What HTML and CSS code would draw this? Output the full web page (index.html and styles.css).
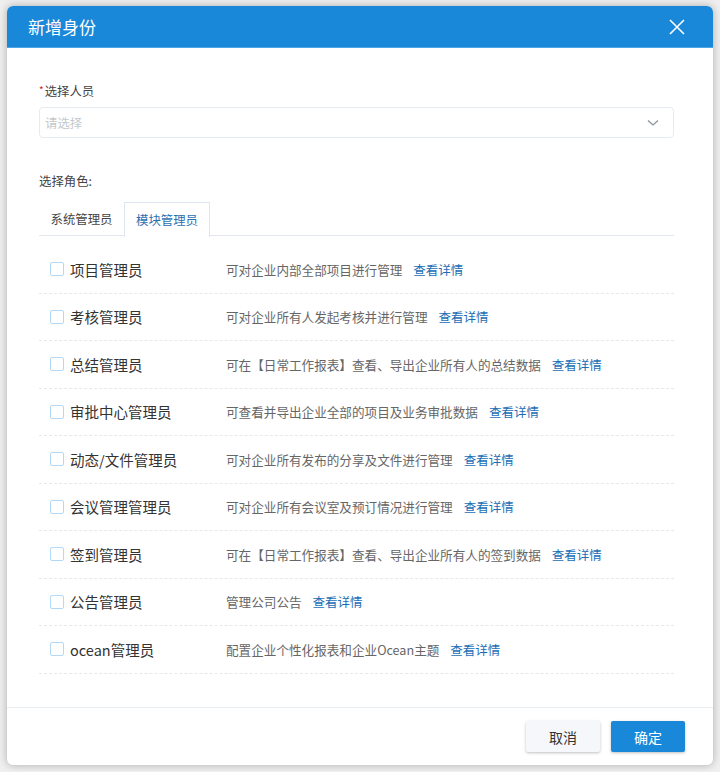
FILE: index.html
```html
<!DOCTYPE html>
<html lang="zh">
<head>
<meta charset="utf-8">
<title>新增身份</title>
<link rel="stylesheet" href="styles.css">
</head>
<body>
<div class="dialog">
  <div class="header">
    <span class="title">新增身份</span>
    <svg class="close" width="16" height="16" viewBox="0 0 16 16"><path d="M1 1L15 15M15 1L1 15" stroke="#fff" stroke-width="1.6" fill="none"/></svg>
  </div>
  <div class="content">
    <div class="label"><span class="req">*</span>选择人员</div>
    <div class="select">
      <span class="placeholder">请选择</span>
      <svg width="12" height="8" viewBox="0 0 12 8"><path d="M1 1.5L6 6L11 1.5" stroke="#8a939c" stroke-width="1.3" fill="none"/></svg>
    </div>
    <div class="label role">选择角色:</div>
    <div class="tabs">
      <div class="tab">系统管理员</div>
      <div class="tab active">模块管理员</div>
    </div>
    <div class="list">
      <div class="row"><span class="cb"></span><span class="name">项目管理员</span><span class="desc">可对企业内部全部项目进行管理</span><span class="link">查看详情</span></div>
      <div class="row"><span class="cb"></span><span class="name">考核管理员</span><span class="desc">可对企业所有人发起考核并进行管理</span><span class="link">查看详情</span></div>
      <div class="row"><span class="cb"></span><span class="name">总结管理员</span><span class="desc">可在【日常工作报表】查看、导出企业所有人的总结数据</span><span class="link">查看详情</span></div>
      <div class="row"><span class="cb"></span><span class="name">审批中心管理员</span><span class="desc">可查看并导出企业全部的项目及业务审批数据</span><span class="link">查看详情</span></div>
      <div class="row"><span class="cb"></span><span class="name">动态/文件管理员</span><span class="desc">可对企业所有发布的分享及文件进行管理</span><span class="link">查看详情</span></div>
      <div class="row"><span class="cb"></span><span class="name">会议管理管理员</span><span class="desc">可对企业所有会议室及预订情况进行管理</span><span class="link">查看详情</span></div>
      <div class="row"><span class="cb"></span><span class="name">签到管理员</span><span class="desc">可在【日常工作报表】查看、导出企业所有人的签到数据</span><span class="link">查看详情</span></div>
      <div class="row"><span class="cb"></span><span class="name">公告管理员</span><span class="desc">管理公司公告</span><span class="link">查看详情</span></div>
      <div class="row"><span class="cb"></span><span class="name">ocean管理员</span><span class="desc">配置企业个性化报表和企业Ocean主题</span><span class="link">查看详情</span></div>
    </div>
  </div>
  <div class="footer">
    <button class="btn cancel">取消</button>
    <button class="btn ok">确定</button>
  </div>
</div>
</body>
</html>
```
FILE: styles.css
```css
* { box-sizing: border-box; }
html, body { margin: 0; }
body {
  background: #efefef;
  padding: 6px 7px;
  font-family: "Noto Sans CJK SC", "Noto Sans", sans-serif;
  color: #333;
}
.dialog {
  width: 706px;
  height: 759px;
  background: #fff;
  border-radius: 6px;
  box-shadow: 0 0 8px rgba(0,0,0,0.28);
  display: flex;
  flex-direction: column;
  overflow: hidden;
}
.header {
  height: 42px;
  flex: none;
  background: #1a88d9;
  border-bottom: 1px solid #4fa6e6;
  display: flex;
  align-items: center;
  justify-content: space-between;
  padding: 0 28px 0 21px;
}
.title { color: #fff; font-size: 17px; }
.content {
  flex: 1;
  padding: 33px 39px 0 32px;
}
.label {
  font-size: 12.4px;
  line-height: 18px;
  color: #444;
  margin-bottom: 7px;
}
.req { color: #e02020; font-size: 10px; vertical-align: 2px; margin-right: 1px; }
.select {
  height: 31px;
  border: 1px solid #e6ebf0;
  border-radius: 4px;
  display: flex;
  align-items: center;
  justify-content: space-between;
  padding: 0 14px 0 5px;
}
.placeholder { color: #c4c8cc; font-size: 12.4px; }
.role { margin-top: 34px; margin-bottom: 12px; }
.tabs {
  display: flex;
  height: 34px;
  border-bottom: 1px solid #e2e8ee;
}
.tab {
  width: 85px;
  font-size: 12.4px;
  color: #444;
  display: flex;
  align-items: center;
  justify-content: center;
  border: 1px solid transparent;
  border-bottom: none;
}
.tab.active {
  width: 86px;
  color: #2a6fb0;
  border-color: #dde6ee;
  background: #fff;
  margin-bottom: -1px;
  height: 35px;
}
.list { padding-top: 10px; }
.row {
  height: 47.5px;
  display: flex;
  align-items: center;
  padding-left: 11px;
  border-bottom: 1px dashed #e6e9ec;
}
.cb {
  width: 14px;
  height: 14px;
  border: 1px solid #b3d9f8;
  border-radius: 2px;
  flex: none;
  margin-right: 6px;
}
.name {
  width: 156px;
  flex: none;
  font-size: 14.5px;
  color: #333;
}
.desc { font-size: 12.6px; color: #666; }
.link { font-size: 12.5px; color: #1b6eb5; margin-left: 11px; }
.footer {
  height: 58px;
  flex: none;
  border-top: 1px solid #e6ecf0;
  display: flex;
  justify-content: flex-end;
  gap: 11px;
  padding: 13px 28px 0 0;
}
.btn {
  width: 74px;
  height: 31px;
  border: none;
  border-radius: 2px;
  font-family: inherit;
  font-size: 14px;
  box-shadow: 0 1px 3px rgba(0,0,0,0.25);
}
.cancel { background: #f5f7fa; color: #333; }
.ok { background: #1a88d9; color: #fff; }
```
